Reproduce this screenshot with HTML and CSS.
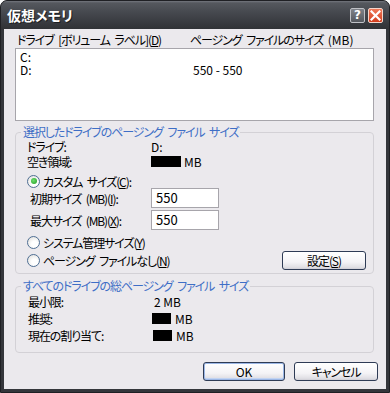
FILE: index.html
```html
<!DOCTYPE html>
<html lang="ja">
<head>
<meta charset="utf-8">
<title>仮想メモリ</title>
<link rel="stylesheet" href="styles.css">
</head>
<body>
<div class="window">
  <div class="titlebar">
    <span class="title">仮想メモリ</span>
    <div class="caption-buttons">
      <span class="cap-btn help">?</span>
      <span class="cap-btn close"><svg width="11" height="11" viewBox="0 0 11 11"><path d="M1.5 1.5 L9.5 9.5 M9.5 1.5 L1.5 9.5" stroke="#fff" stroke-width="2.2" stroke-linecap="square"/></svg></span>
    </div>
  </div>
  <div class="client">
    <div class="list-header">
      <span class="col1">ドライブ [ボリューム ラベル](<u>D</u>)</span>
      <span class="col2">ページング ファイルのサイズ <span class="num">(MB)</span></span>
    </div>
    <div class="listbox">
      <div class="lrow"><span class="col1 num">C:</span><span class="col2"></span></div>
      <div class="lrow"><span class="col1 num">D:</span><span class="col2 num">550 - 550</span></div>
    </div>

    <fieldset class="group">
      <legend>選択したドライブのページング ファイル サイズ</legend>
      <div class="gbody g1">
        <div class="row"><span class="lbl">ドライブ:</span><span class="num">D:</span></div>
        <div class="row"><span class="lbl">空き領域:</span><span class="blk w30"></span><span class="unit num">MB</span></div>
        <div class="radio-row first"><span class="radio checked"></span><span>カスタム サイズ(<u>C</u>):</span></div>
        <div class="input-row"><span class="lbl ind">初期サイズ (MB)(<u>I</u>):</span><span class="input num">550</span></div>
        <div class="input-row second"><span class="lbl ind">最大サイズ (MB)(<u>X</u>):</span><span class="input num">550</span></div>
        <div class="radio-row mid"><span class="radio"></span><span>システム管理サイズ(<u>Y</u>)</span></div>
        <div class="radio-row last"><span class="radio"></span><span>ページング ファイルなし(<u>N</u>)</span><span class="btn set">設定(<u>S</u>)</span></div>
      </div>
    </fieldset>

    <fieldset class="group g2wrap">
      <legend>すべてのドライブの総ページング ファイル サイズ</legend>
      <div class="gbody g2">
        <div class="row2"><span class="lbl">最小限:</span><span class="val2 num">2 MB</span></div>
        <div class="row2"><span class="lbl">推奨:</span><span class="blk w19"></span><span class="unit2 num">MB</span></div>
        <div class="row2"><span class="lbl">現在の割り当て:</span><span class="blk w19 off"></span><span class="unit2 num">MB</span></div>
      </div>
    </fieldset>

    <div class="buttons">
      <span class="btn ok num">OK</span>
      <span class="btn cancel">キャンセル</span>
    </div>
  </div>
</div>
</body>
</html>
```

FILE: styles.css
```css
* { box-sizing: border-box; }
html, body { margin: 0; padding: 0; }
body {
  width: 390px;
  height: 393px;
  background: #ffffff;
  font-family: "Noto Sans CJK JP", "Noto Sans", sans-serif;
  font-size: 12px;
  letter-spacing: -1.1px;
  word-spacing: 3px;
  color: #000;
  font-feature-settings: "palt";
  overflow: hidden;
}
.num { letter-spacing: 0; word-spacing: 0; }
u { text-decoration: underline; text-underline-offset: 1px; }

.window {
  width: 390px;
  height: 393px;
  display: flex;
  flex-direction: column;
  background: #34363b;
  border: 1px solid #1f2024;
  border-radius: 7px 7px 0 0;
  overflow: hidden;
}

.titlebar {
  height: 28px;
  flex: none;
  display: flex;
  align-items: center;
  justify-content: space-between;
  padding: 0 6px 0 6px;
  background: linear-gradient(#74777e 0, #55585e 2px, #46494f 40%, #393b40 75%, #303236 100%);
}
.title {
  color: #fff;
  font-weight: bold;
  font-size: 14px;
  letter-spacing: 0;
  line-height: 16px;
  text-shadow: 1px 1px 0 #1d1e21;
}
.caption-buttons {
  display: flex;
  gap: 3px;
  margin-top: 1px;
}
.cap-btn {
  width: 15px;
  height: 15px;
  border-radius: 2px;
  display: flex;
  align-items: center;
  justify-content: center;
  letter-spacing: 0;
}
.help {
  background: linear-gradient(#80838a, #54575d);
  border: 1px solid #bfc1c6;
  color: #fff;
  font-family: "DejaVu Sans", sans-serif;
  font-weight: bold;
  font-size: 12px;
  line-height: 13px;
}
.close {
  background: linear-gradient(#ef7a5a, #d23c1c);
  border: 1px solid #f4d6cc;
}

.client {
  flex: 1;
  margin: 0 3px 3px 3px;
  background: #ebe9ed;
  padding: 4px 8px 0 11px;
  display: flex;
  flex-direction: column;
}

.list-header {
  display: flex;
  height: 14px;
  line-height: 14px;
  padding-left: 2px;
}
.list-header .col1 { width: 173px; }

.listbox {
  margin-top: 1px;
  margin-right: 4px;
  height: 73px;
  background: #fff;
  border: 1px solid #a7a5ab;
  padding: 1px 0 0 4px;
}
.lrow {
  display: flex;
  height: 13px;
  line-height: 13px;
}
.lrow .col1 { width: 173px; }

.group {
  margin: 4px 4px 0 0;
  padding: 0;
  border: 1px solid #d3d1d6;
  border-radius: 4px;
  min-width: 0;
}
.group legend {
  margin-left: 5px;
  padding: 0 2px;
  color: #3e6ec6;
  line-height: 14px;
  height: 14px;
}
.g2wrap { margin-top: 5px; }

.gbody { padding: 0 7px 3px 11px; }

.lbl { width: 124px; flex: none; }
.lbl.ind { padding-left: 3px; }

.row {
  display: flex;
  align-items: center;
  height: 15px;
}
.blk {
  display: inline-block;
  background: #000;
  height: 11px;
}
.w30 { width: 30px; }
.w19 { width: 19px; }
.blk.off { margin-left: 1px; }
.unit { margin-left: 3px; }
.unit2 { margin-left: 4px; }

.radio-row {
  display: flex;
  align-items: center;
  height: 14px;
}
.radio-row.first { margin-top: 5px; }
.radio-row.mid { margin-top: 5px; }
.radio-row.last { margin-top: 2px; height: 19px; }
.radio {
  width: 13px;
  height: 13px;
  border-radius: 50%;
  border: 1px solid #4f6f94;
  background: radial-gradient(circle at 60% 65%, #ffffff 30%, #dcdad6 100%);
  margin-right: 3px;
  flex: none;
  display: flex;
  align-items: center;
  justify-content: center;
}
.radio.checked::after {
  content: "";
  width: 6px;
  height: 6px;
  border-radius: 50%;
  background: radial-gradient(circle at 40% 40%, #6ede6e, #1f9a1f);
}

.input-row {
  display: flex;
  align-items: center;
  height: 20px;
}
.input-row.second { margin-top: 2px; }
.input {
  width: 68px;
  height: 20px;
  border: 1px solid #a7a5ab;
  background: #fff;
  padding-left: 4px;
  line-height: 18px;
  font-size: 13px;
}

.btn {
  display: flex;
  align-items: center;
  justify-content: center;
  height: 19px;
  border: 1px solid #2e3b55;
  border-radius: 3px;
  background: linear-gradient(#ffffff 0, #f4f3f6 60%, #e0dfe4 90%, #cfced6 100%);
  font-size: 12px;
  line-height: 14px;
}
.btn.set {
  margin-left: auto;
  width: 84px;
}

.row2 {
  display: flex;
  align-items: center;
  height: 17px;
}
.val2 { padding-left: 2px; }
.g2 { padding-bottom: 8px; padding-left: 12px; }

.buttons {
  display: flex;
  justify-content: flex-end;
  gap: 9px;
  margin-top: 9px;
}
.btn.ok {
  width: 82px;
  box-shadow: inset 0 0 0 1px #9cb7e6, inset 0 -1px 0 1px #c1d3f2;
}
.btn.cancel { width: 84px; }
```
